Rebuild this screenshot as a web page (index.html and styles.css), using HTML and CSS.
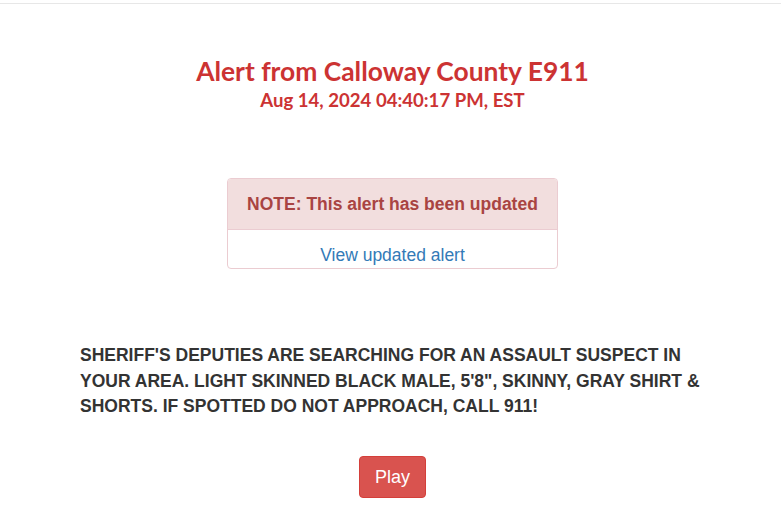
FILE: index.html
```html
<!DOCTYPE html>
<html lang="en">
<head>
    <meta charset="UTF-8">
    <meta name="viewport" content="width=device-width, initial-scale=1.0">
    <title>Alert from Calloway County E911</title>
    <link rel="stylesheet" href="styles.css">
</head>
<body>
    <div class="topbar"></div>
    <div class="container">
        <div class="header">
            <h1>Alert from Calloway County E911</h1>
            <h2>Aug 14, 2024 04:40:17 PM, EST</h2>
        </div>

        <div class="panel-wrap">
            <div class="panel">
                <div class="panel-heading"><b>NOTE:</b> This alert has been updated</div>
                <div class="panel-body"><a href="#">View updated alert</a></div>
            </div>
        </div>

        <p class="message">SHERIFF'S DEPUTIES ARE SEARCHING FOR AN ASSAULT SUSPECT IN YOUR AREA. LIGHT SKINNED BLACK MALE, 5'8", SKINNY, GRAY SHIRT &amp; SHORTS. IF SPOTTED DO NOT APPROACH, CALL 911!</p>

        <div class="actions">
            <button class="btn">Play</button>
        </div>
    </div>
</body>
</html>
```

FILE: styles.css
```css
body { margin: 0; font-family: "Liberation Sans", Arial, sans-serif; color: #333; background: #fff; }
.topbar { height: 3px; border-bottom: 1px solid #e7e7e7; }
.container { width: 621px; margin: 0 auto; }
.header { text-align: center; padding: 51px 0 0 4px; }
h1 { font-family: Lato, "Open Sans", sans-serif; font-weight: bold; font-size: 26.4px; color: #cc3333; margin: 0; line-height: 32px; }
h2 { font-family: Lato, "Open Sans", sans-serif; font-weight: bold; font-size: 18.6px; color: #cc3333; margin: 2px 0 0; line-height: 22px; }
.panel-wrap { padding-left: 4px; margin-top: 67px; }
.panel { width: 329px; margin: 0 auto; border: 1px solid #ebccd1; border-radius: 4px; text-align: center; font-size: 17.5px; }
.panel-heading { background: #f2dede; color: #a94442; font-weight: bold; height: 50px; line-height: 50px; border-bottom: 1px solid #ebccd1; border-radius: 3px 3px 0 0; }
.panel-body { height: 38px; line-height: 50px; overflow: hidden; }
.panel-body a { color: #337ab7; text-decoration: none; line-height: 1; }
.message { font-weight: bold; font-size: 17.5px; line-height: 25.5px; margin: 74px 0 0; }
.actions { text-align: center; margin-top: 36px; padding-left: 4px; }
.btn { background: #d9534f; border: 1px solid #d43f3a; color: #fff; border-radius: 4px; font-family: "Liberation Sans", Arial, sans-serif; font-size: 18px; padding: 9px 15px; line-height: 22px; cursor: pointer; }
```
